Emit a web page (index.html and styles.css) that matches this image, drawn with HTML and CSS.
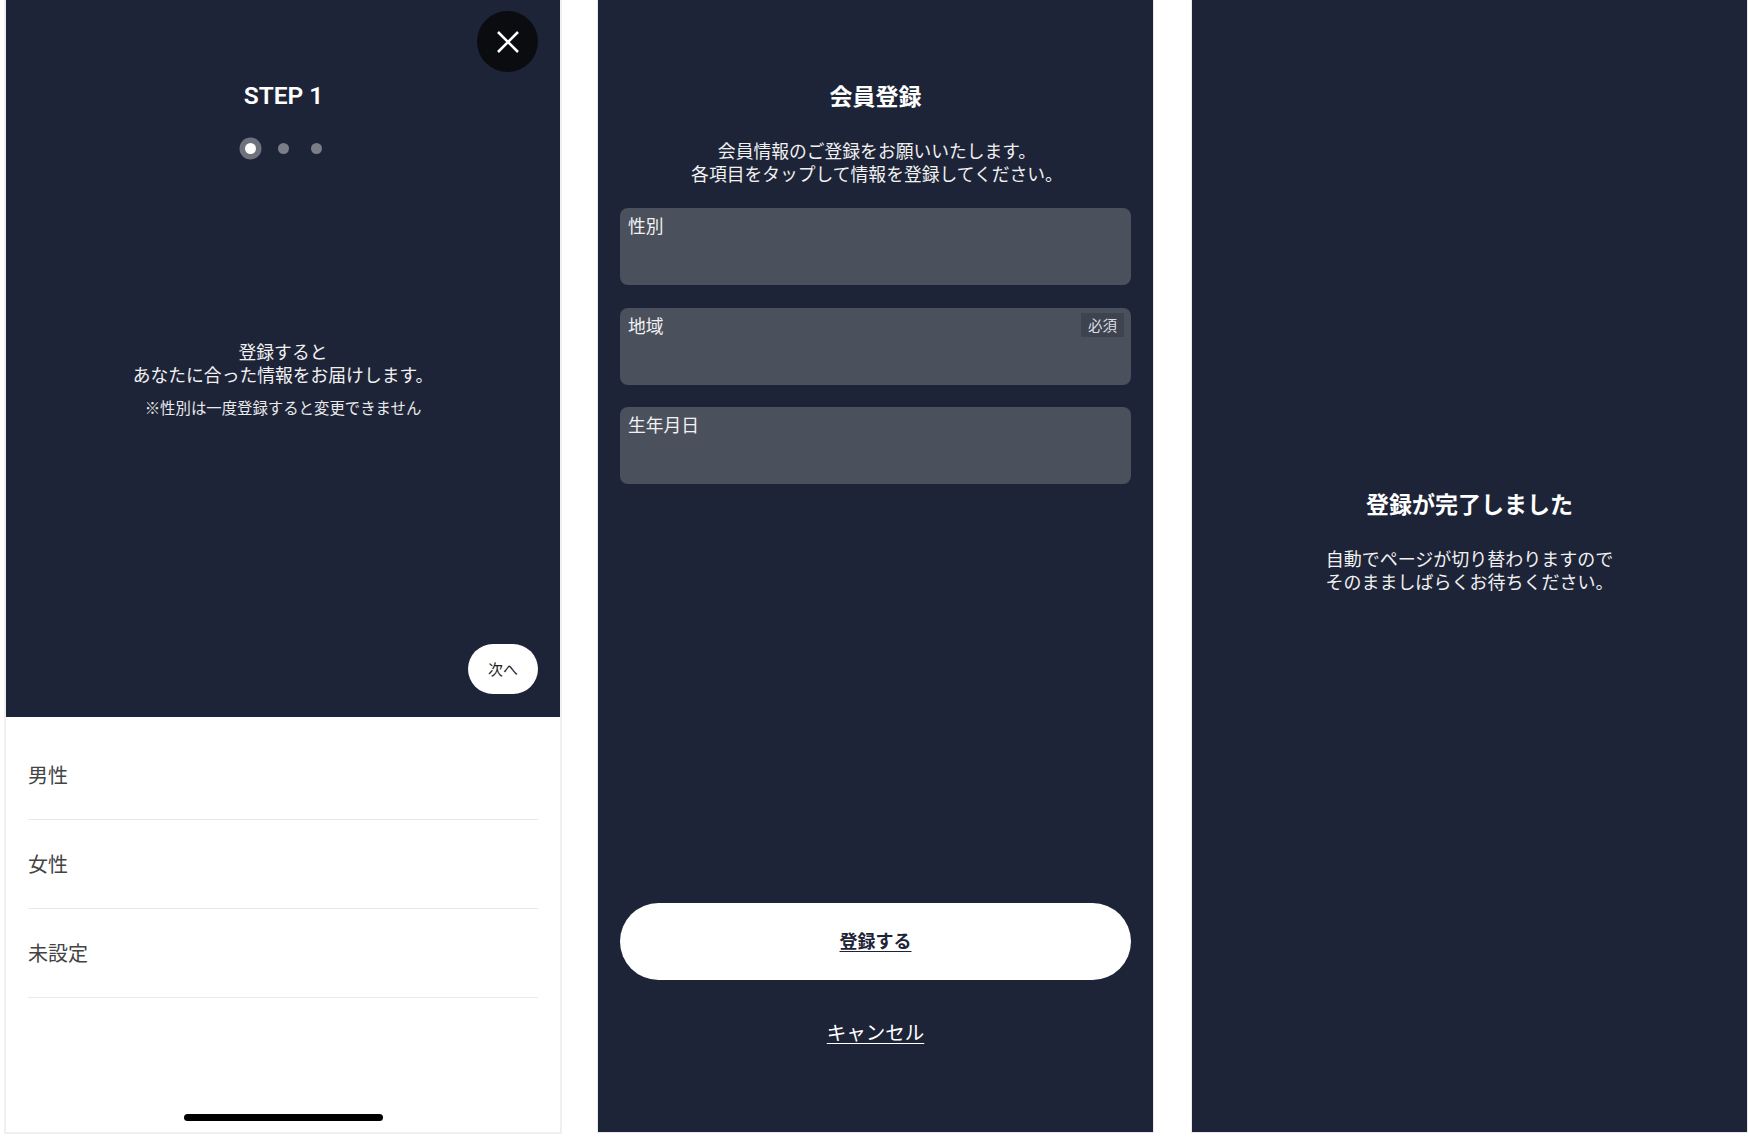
FILE: index.html
```html
<!DOCTYPE html>
<html lang="ja">
<head>
<meta charset="utf-8">
<title>会員登録</title>
<link rel="stylesheet" href="styles.css">
</head>
<body>
<main class="page">
  <section class="panel panel-step">
    <div class="step-dark">
      <button class="close" aria-label="閉じる">
        <svg viewBox="0 0 22 22" width="22" height="22"><path d="M1 1 21 21M21 1 1 21"/></svg>
      </button>
      <h1 class="step-title">STEP 1</h1>
      <div class="dots"><span class="dot active"></span><span class="dot"></span><span class="dot"></span></div>
      <p class="message step-message">登録すると<br>あなたに合った情報をお届けします。</p>
      <p class="note">※性別は一度登録すると変更できません</p>
      <button class="next">次へ</button>
    </div>
    <div class="step-light">
      <ul class="options">
        <li>男性</li>
        <li>女性</li>
        <li>未設定</li>
      </ul>
      <div class="home-bar"></div>
    </div>
  </section>

  <section class="panel panel-form">
    <h2 class="heading">会員登録</h2>
    <p class="message form-message">会員情報のご登録をお願いいたします。<br>各項目をタップして情報を登録してください。</p>
    <div class="fields">
      <div class="field"><span>性別</span></div>
      <div class="field"><span>地域</span><em class="required">必須</em></div>
      <div class="field"><span>生年月日</span></div>
    </div>
    <a class="submit" href="#">登録する</a>
    <a class="cancel" href="#">キャンセル</a>
  </section>

  <section class="panel panel-done">
    <h2 class="heading">登録が完了しました</h2>
    <p class="message done-message">自動でページが切り替わりますので<br>そのまましばらくお待ちください。</p>
  </section>
</main>
</body>
</html>
```

FILE: styles.css
```css
* { box-sizing: border-box; }
html, body { margin: 0; padding: 0; background: #fff; }
body {
  font-family: "Noto Sans CJK JP", "Noto Sans", sans-serif;
  color: #fff;
}
h1, h2, p, ul { margin: 0; padding: 0; }

.page {
  display: flex;
  gap: 36px;
  padding-left: 4px;
  align-items: flex-start;
}

.panel {
  width: 557px;
  height: 1134px;
  display: flex;
  flex-direction: column;
  border: 1px solid #e8e9ec;
  border-top: 0;
  background: #1e2437;
  position: relative;
}
.panel-step {
  width: 558px;
  border: 2px solid #eeeff1;
  border-top: 0;
  background: #fff;
}
.panel-form {
  align-items: center;
  padding-top: 80px;
  height: 1133px;
  margin: 0 1px 0 -1px;
}
.panel-done { align-items: center; padding-top: 488px; height: 1133px; }

.step-dark {
  height: 717px;
  background: #1e2437;
  display: flex;
  flex-direction: column;
  align-items: center;
  padding-top: 81px;
}
.close {
  position: absolute;
  top: 11px;
  right: 22px;
  width: 61px;
  height: 61px;
  border: 0;
  padding: 0;
  border-radius: 50%;
  background: #0a0c10;
  display: flex;
  align-items: center;
  justify-content: center;
}
.close svg { fill: none; stroke: #fff; stroke-width: 2.6; }

.step-title {
  font-family: Roboto, "Noto Sans CJK JP", sans-serif;
  font-size: 24.5px;
  line-height: 30px;
  font-weight: 600;
  margin-left: 1px;
}
.dots {
  display: flex;
  gap: 22px;
  margin-top: 31.5px;
}
.dot {
  width: 11px;
  height: 11px;
  border-radius: 50%;
  background: #7b7d87;
}
.dot.active {
  background: #fff;
  box-shadow: 0 0 0 5.5px #6f717c;
}

.message {
  font-size: 17.8px;
  line-height: 23.3px;
  text-align: center;
  color: #f1f1f2;
}
.step-message { margin-top: 186px; }
.note {
  margin-top: 10px;
  font-size: 15.4px;
  line-height: 23px;
  color: #e9eaec;
}
.next {
  margin-top: auto;
  margin-bottom: 23px;
  margin-right: 22px;
  align-self: flex-end;
  width: 70px;
  height: 50px;
  border: 0;
  padding: 0 0 2px;
  border-radius: 25px;
  background: #fff;
  color: #222;
  font-family: inherit;
  font-size: 15px;
}

.step-light {
  flex: 1;
  display: flex;
  flex-direction: column;
  padding: 13.5px 22px 11px;
  color: #444;
}
.options { list-style: none; }
.options li {
  height: 89px;
  display: flex;
  align-items: center;
  font-size: 20px;
  border-bottom: 1px solid #e8e9ea;
  padding-bottom: 1px;
}
.home-bar {
  margin-top: auto;
  align-self: center;
  width: 199px;
  height: 7px;
  border-radius: 4px;
  background: #000;
}

.heading {
  font-size: 23px;
  line-height: 30px;
  font-weight: 700;
}
.form-message { margin-top: 28.5px; padding-left: 3px; }
.fields {
  width: 511px;
  margin-top: 23px;
  display: flex;
  flex-direction: column;
  gap: 22.5px;
}
.field {
  height: 77px;
  border-radius: 8px;
  background: #4b505d;
  padding: 5px 7px 0 8px;
  display: flex;
  justify-content: space-between;
  align-items: flex-start;
  font-size: 17.8px;
  line-height: 24px;
  color: #f2f2f3;
}
.required {
  font-style: normal;
  width: 43px;
  height: 24px;
  background: #3e4350;
  font-size: 14.5px;
  line-height: 24px;
  text-align: center;
  color: #dcdde0;
}
.submit {
  margin-top: auto;
  width: 511px;
  height: 77px;
  border-radius: 38.5px;
  background: #fff;
  color: #1e2437;
  font-size: 18px;
  font-weight: 700;
  line-height: 75px;
  text-align: center;
  text-underline-offset: 3px;
}
.cancel {
  margin-top: 38px;
  margin-bottom: 86px;
  color: #fff;
  font-size: 19.5px;
  line-height: 28px;
  text-underline-offset: 3px;
}
.done-message { margin-top: 28.5px; font-size: 18px; line-height: 23.5px; }
```
